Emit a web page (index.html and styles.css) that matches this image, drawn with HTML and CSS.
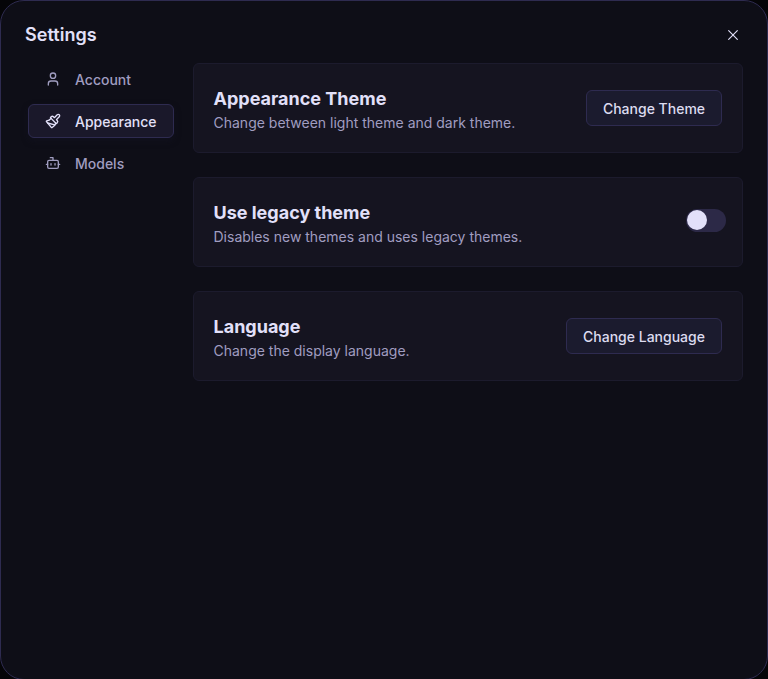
FILE: index.html
```html
<!DOCTYPE html>
<html lang="en">
<head>
<meta charset="utf-8">
<title>Settings</title>
<link rel="stylesheet" href="styles.css">
</head>
<body>
<main class="dialog">
  <header class="header">
    <h1 class="title">Settings</h1>
    <button class="close" aria-label="Close">
      <svg class="icon" viewBox="0 0 24 24"><path d="M18.5 5.5 5.5 18.5"/><path d="m5.5 5.5 13 13"/></svg>
    </button>
  </header>
  <div class="body">
    <nav class="nav">
      <a class="nav-item">
        <svg class="icon" viewBox="0 0 24 24"><path d="M19 21v-2a4 4 0 0 0-4-4H9a4 4 0 0 0-4 4v2"/><circle cx="12" cy="7" r="4"/></svg>
        <span>Account</span>
      </a>
      <a class="nav-item active">
        <svg class="icon" viewBox="0 0 24 24"><path d="m14.622 17.897-10.68-2.913"/><path d="M18.376 2.622a1 1 0 1 1 3.002 3.002L17.36 9.643a.5.5 0 0 0 0 .707l.944.944a2.41 2.41 0 0 1 0 3.408l-.944.944a.5.5 0 0 1-.707 0L8.354 7.348a.5.5 0 0 1 0-.707l.944-.944a2.41 2.41 0 0 1 3.408 0l.944.944a.5.5 0 0 0 .707 0z"/><path d="M9 8c-1.804 2.71-3.97 3.46-6.583 3.948a.507.507 0 0 0-.302.819l7.32 8.883a1 1 0 0 0 1.185.204C12.735 20.405 16 16.792 16 15"/></svg>
        <span>Appearance</span>
      </a>
      <a class="nav-item">
        <svg class="icon" viewBox="0 0 24 24"><path d="M12 8V4H8"/><rect width="16" height="12" x="4" y="8" rx="2"/><path d="M2 14h2"/><path d="M20 14h2"/><path d="M15 13v2"/><path d="M9 13v2"/></svg>
        <span>Models</span>
      </a>
    </nav>
    <div class="cards">
      <section class="card">
        <div class="card-copy">
          <h2 class="card-title">Appearance Theme</h2>
          <p class="card-text">Change between light theme and dark theme.</p>
        </div>
        <button class="button theme">Change Theme</button>
      </section>
      <section class="card">
        <div class="card-copy">
          <h2 class="card-title">Use legacy theme</h2>
          <p class="card-text">Disables new themes and uses legacy themes.</p>
        </div>
        <span class="switch" role="switch" aria-checked="false"><span class="thumb"></span></span>
      </section>
      <section class="card">
        <div class="card-copy">
          <h2 class="card-title">Language</h2>
          <p class="card-text">Change the display language.</p>
        </div>
        <button class="button language">Change Language</button>
      </section>
    </div>
  </div>
</main>
</body>
</html>
```
FILE: styles.css
```css
* { box-sizing: border-box; }
html { height: 100%; overflow: hidden; background: #050508; }
body {
  margin: 0;
  height: 100%;
  overflow: hidden;
  font-family: Inter, sans-serif;
  color: #e2e0f9;
}
h1, h2, p { margin: 0; }
button { font: inherit; color: inherit; }
.dialog {
  height: 680px;
  padding: 24px;
  border: 1px solid #2e2b50;
  border-radius: 24px;
  background: #0e0e17;
}
.header {
  display: flex;
  justify-content: space-between;
  height: 38px;
}
.title { font-size: 18px; font-weight: 600; line-height: 20px; letter-spacing: 0.05px; }
.close {
  display: flex;
  width: 16px;
  height: 16px;
  margin: 2px 2px 0 0;
  padding: 0;
  border: 0;
  background: none;
}
.icon {
  flex: none;
  width: 16px;
  height: 16px;
  fill: none;
  stroke: currentColor;
  stroke-width: 2;
  stroke-linecap: round;
  stroke-linejoin: round;
}
.close .icon { stroke-width: 1.7; }
.body { display: flex; gap: 19px; }
.nav {
  display: flex;
  flex-direction: column;
  gap: 8px;
  width: 146px;
  margin: -1px 0 0 3px;
}
.nav-item {
  display: flex;
  align-items: center;
  gap: 14px;
  height: 34px;
  padding: 0 16px;
  border: 1px solid transparent;
  border-radius: 6px;
  color: #a09dc0;
  font-size: 14px;
  font-weight: 500;
}
.active {
  color: #e2e0f9;
  background: #1a182a;
  border-color: #2e2b50;
  box-shadow: 0 3px 6px rgb(20 19 36 / 50%);
}
.cards {
  display: flex;
  flex: 1;
  flex-direction: column;
  gap: 24px;
}
.card {
  display: flex;
  align-items: center;
  justify-content: space-between;
  height: 90px;
  padding: 0 20px 0 19.5px;
  border: 1px solid #1c1b2d;
  border-radius: 6px;
  background: #151420;
}
.card-copy { padding-top: 2px; }
.card-title { font-size: 18px; font-weight: 700; line-height: 28px; }
.card-text { color: #a09dc0; font-size: 14px; line-height: 20px; }
.button {
  height: 36px;
  padding: 0;
  border: 1px solid #2e2b50;
  border-radius: 6px;
  background: #1b1b2e;
  color: #dddbf0;
  font-size: 14px;
  font-weight: 500;
}
.theme { width: 136px; }
.language { width: 156px; }
.switch {
  display: flex;
  width: 40px;
  height: 23px;
  margin: -3px -4px 0 0;
  padding: 1px;
  border-radius: 12px;
  background: #2c2947;
}
.thumb { width: 20px; height: 20px; border-radius: 50%; background: #e2e0f9; }
```
